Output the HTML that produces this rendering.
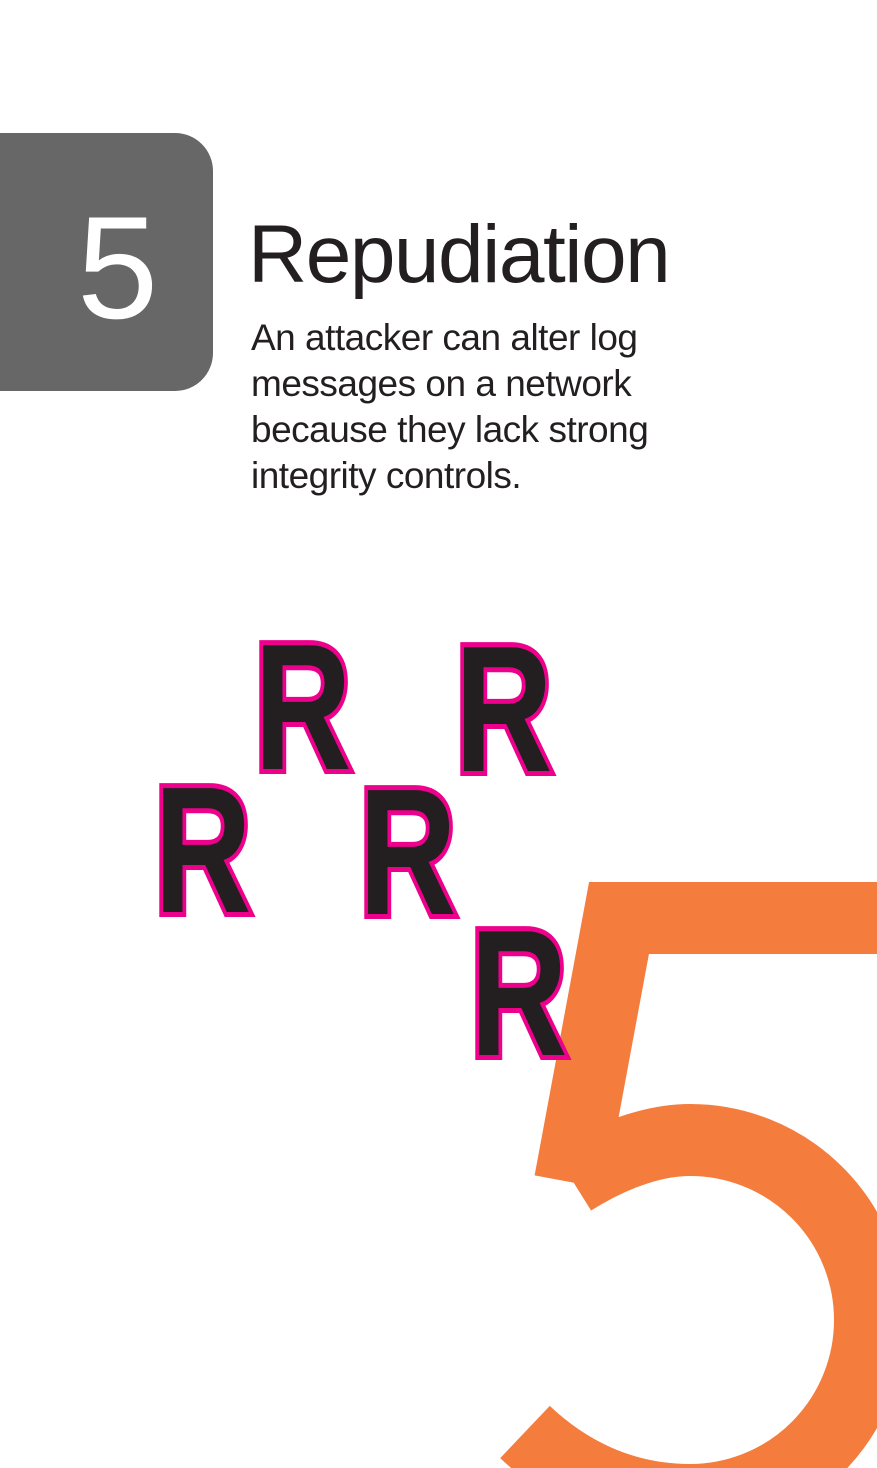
<!DOCTYPE html>
<html><head><meta charset="utf-8"><style>
html,body{margin:0;padding:0;background:#fff;}
body{width:877px;height:1468px;position:relative;overflow:hidden;font-family:"Liberation Sans",sans-serif;color:#231f20;}
.box{position:absolute;left:0;top:133px;width:213px;height:258px;background:#686767;border-radius:0 38px 38px 0;}
.box span{position:absolute;left:77px;top:62px;color:#fff;font-size:146px;line-height:1;}
.title{position:absolute;left:248px;top:214px;font-size:82px;line-height:1;font-weight:300;letter-spacing:-1.5px;}
.body{position:absolute;left:251px;top:315px;font-size:37px;line-height:46px;letter-spacing:-0.5px;}
svg{position:absolute;left:0;top:0;}
</style></head><body>
<svg width="877" height="1468">
<path d="M900,918 L619,918 L570,1182 M572,1180 C620,1150 660,1140 690,1140 A180,180 0 0 1 690,1500 C620,1500 565,1470 525,1432" fill="none" stroke="#f47c3c" stroke-width="72" stroke-linejoin="miter"/>
<g font-family="Liberation Sans" font-weight="bold" font-size="180" fill="#231f20" stroke="#ec008c" stroke-width="10" paint-order="stroke">
<text transform="translate(254,769) scale(0.75,1)">R</text>
<text transform="translate(455,771) scale(0.75,1)">R</text>
<text transform="translate(154,912) scale(0.75,1)">R</text>
<text transform="translate(359,914) scale(0.75,1)">R</text>
<text transform="translate(470,1055) scale(0.75,1)">R</text>
</g>
</svg>
<div class="box"><span>5</span></div>
<div class="title">Repudiation</div>
<div class="body">An attacker can alter log<br>messages on a network<br>because they lack strong<br>integrity controls.</div>
</body></html>
